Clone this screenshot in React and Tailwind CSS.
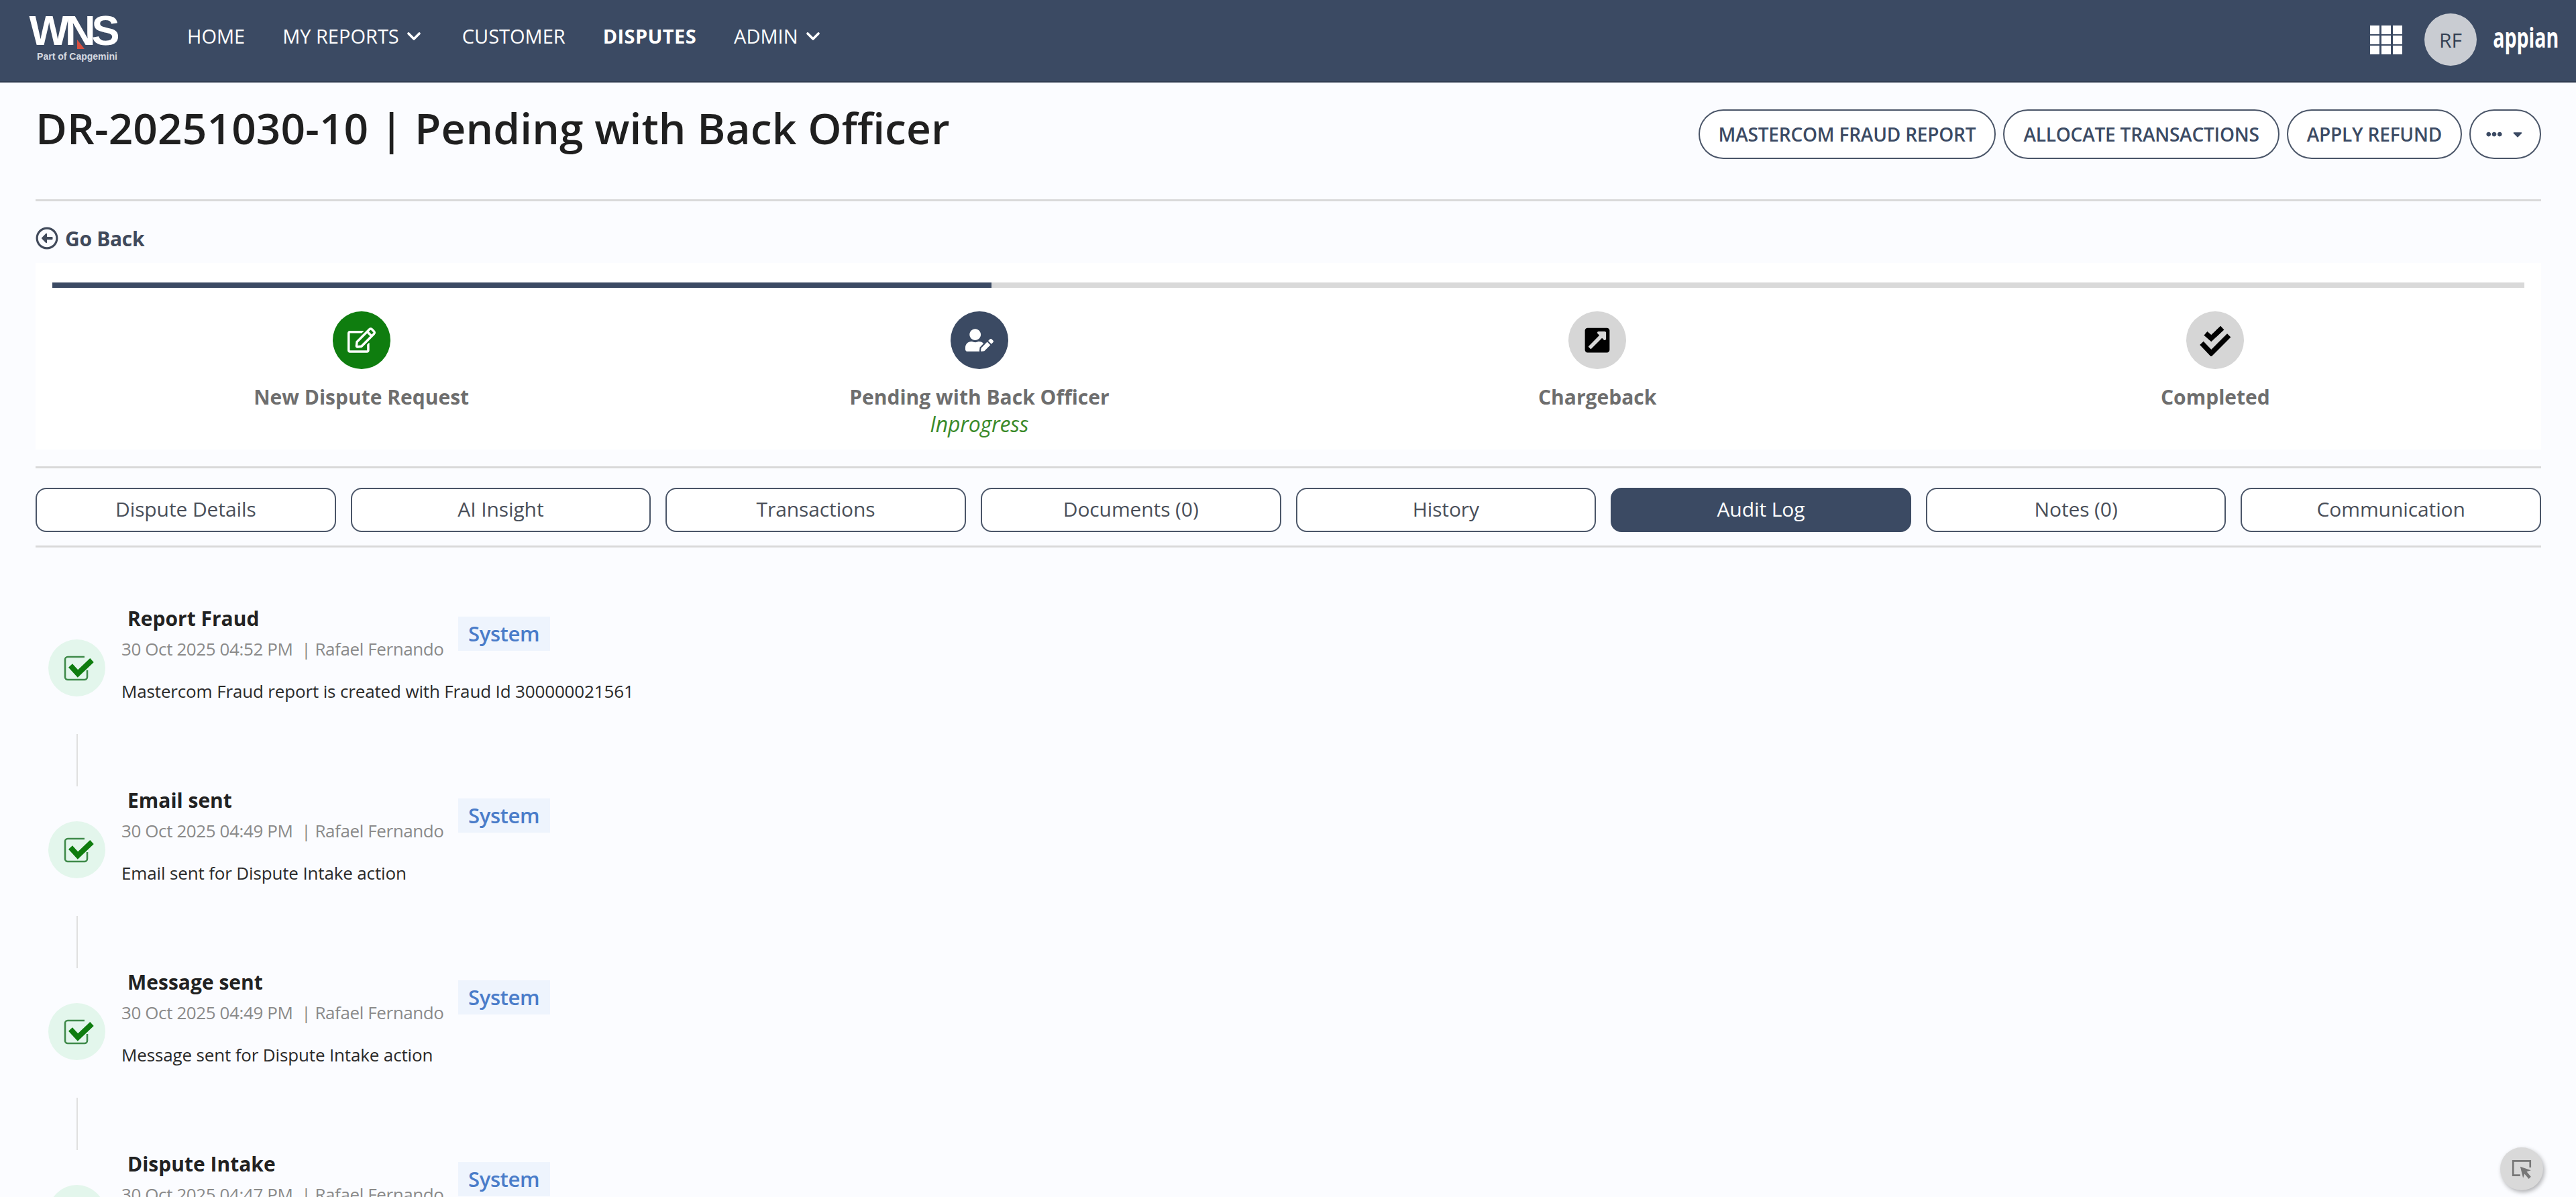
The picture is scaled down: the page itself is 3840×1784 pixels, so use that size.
import { ChevronDown } from 'lucide-react';
import {
  FaRegEdit,
  FaUserEdit,
  FaExternalLinkSquareAlt,
  FaRegArrowAltCircleLeft,
  FaEllipsisH,
  FaCaretDown,
} from 'react-icons/fa';

function DoubleCheck({ className }) {
  return (
    <svg viewBox="85 105 145 140" className={className} fill="none" stroke="currentColor" strokeWidth="23" strokeLinecap="butt" strokeLinejoin="miter">
      <path d="M115 143l25 22 50-47" />
      <path d="M97 187l43 45 80-80" />
    </svg>
  );
}

function LogCheck() {
  return (
    <svg viewBox="0 0 46 38" className="w-[46px] h-[38px] ml-[6px]" fill="none">
      <path d="M31 2H6a4 4 0 0 0-4 4v26a4 4 0 0 0 4 4h25a4 4 0 0 0 4-4V22" stroke="#3f8a4a" strokeWidth="2.6" />
      <path d="M10 15l11 12L42 7" stroke="#0f7d0f" strokeWidth="8" />
    </svg>
  );
}

function GridIcon() {
  return (
    <svg viewBox="0 0 48 43" className="w-[48px] h-[43px]" fill="#fff">
      {[0, 17, 34].map((x) =>
        [0, 15, 30].map((y) => <rect key={`${x}-${y}`} x={x} y={y} width="14" height="13" />)
      )}
    </svg>
  );
}

const steps = [
  { label: 'New Dispute Request', icon: FaRegEdit, circle: 'bg-[#0f7d0f] text-white', size: 'w-[42px] h-[42px]' },
  { label: 'Pending with Back Officer', icon: FaUserEdit, circle: 'bg-[#3b4a63] text-white', sub: 'Inprogress', size: 'w-[42px] h-[42px]' },
  { label: 'Chargeback', icon: FaExternalLinkSquareAlt, circle: 'bg-[#d6d6d6] text-black', size: 'w-[42px] h-[42px]' },
  { label: 'Completed', icon: DoubleCheck, circle: 'bg-[#d6d6d6] text-black', size: 'w-[48px] h-[47px]' },
];

const tabs = ['Dispute Details', 'AI Insight', 'Transactions', 'Documents (0)', 'History', 'Audit Log', 'Notes (0)', 'Communication'];

const logs = [
  { title: 'Report Fraud', date: '30 Oct 2025 04:52 PM', text: 'Mastercom Fraud report is created with Fraud Id 300000021561' },
  { title: 'Email sent', date: '30 Oct 2025 04:49 PM', text: 'Email sent for Dispute Intake action' },
  { title: 'Message sent', date: '30 Oct 2025 04:49 PM', text: 'Message sent for Dispute Intake action' },
  { title: 'Dispute Intake', date: '30 Oct 2025 04:47 PM' },
];

function NavLink({ children, bold, caret }) {
  return (
    <div className={`flex items-center gap-[6px] text-[29px] text-white ${bold ? 'font-bold tracking-[0.4px]' : 'font-normal tracking-[0px]'}`}>
      {children}
      {caret && <ChevronDown className="w-[32px] h-[32px]" strokeWidth={2.75} />}
    </div>
  );
}

function ActionButton({ children }) {
  return (
    <button className="h-[74px] px-[28px] rounded-full border-2 border-[#4a5568] bg-white text-[28px] font-semibold tracking-[-0.2px] text-[#3b4a63] flex items-center gap-[10px]">
      {children}
    </button>
  );
}

function LogItem({ item }) {
  return (
    <div className="flex items-start h-[193px] gap-[24px] shrink-0">
      <div className="mt-[52px] w-[85px] h-[85px] rounded-full bg-[#e3f6ec] flex items-center justify-center">
        <LogCheck />
      </div>
      <div className="flex flex-col">
        <div className="flex items-start">
          <div className="flex flex-col">
            <div className="ml-[9px] text-[30px] leading-[42px] font-bold text-[#222]">{item.title}</div>
            <div className="mt-[2px] text-[26px] leading-[44px] text-[#8a8a8a] tracking-[-0.4px]">
              {item.date}&nbsp; | Rafael Fernando
            </div>
          </div>
          <div className="ml-[21px] mt-[18px] h-[51px] w-[137px] bg-[#eef4fd] text-[#4a7cc9] text-[31px] font-semibold tracking-[-0.4px] flex items-center justify-center">
            System
          </div>
        </div>
        {item.text && <div className="mt-[23px] text-[26px] leading-[36px] text-[#2a2a2a] tracking-[-0.15px]">{item.text}</div>}
      </div>
    </div>
  );
}

export default function App() {
  return (
    <div className="relative h-[1784px] overflow-hidden bg-[#fbfcff] font-['Open_Sans',sans-serif]">
      {/* top bar */}
      <header className="h-[123px] bg-[#3b4a63] border-b-2 border-[#2f3b50] flex items-start justify-between pl-[46px] pr-[26px]">
        <div className="flex items-start">
          <div className="relative w-[130px] pt-[14px] flex flex-col items-center text-white">
            <div className="font-['Liberation_Sans',sans-serif] font-bold text-[63px] leading-[62px] tracking-[-6px] pr-[6px]">WNS</div>
            <div className="font-['Liberation_Sans',sans-serif] text-[14px] leading-[16px] font-bold text-[#d5d9e0] ml-[8px]">Part of Capgemini</div>
            <svg className="absolute left-[66px] top-[59px] w-[14px] h-[14px]" viewBox="0 0 14 14">
              <polygon points="3,0 14,14 3,14" fill="#d9503f" />
            </svg>
          </div>
          <nav className="ml-[103px] mt-[32px] flex items-center gap-[56px]">
            <NavLink>HOME</NavLink>
            <NavLink caret>MY REPORTS</NavLink>
            <NavLink>CUSTOMER</NavLink>
            <NavLink bold>DISPUTES</NavLink>
            <NavLink caret>ADMIN</NavLink>
          </nav>
        </div>
        <div className="flex items-center mt-[20px]">
          <GridIcon />
          <div className="ml-[33px] w-[78px] h-[78px] rounded-full bg-[#c9ccd2] flex items-center justify-center text-[30px] text-[#333f52] font-medium">RF</div>
          <div className="ml-[28px] w-[94px] flex justify-end">
            <span className="text-[42px] leading-none font-bold text-white scale-x-[0.68] origin-right pb-[8px]">appian</span>
          </div>
        </div>
      </header>

      <main className="pl-[53px] pr-[52px]">
        {/* title row */}
        <div className="h-[177px] border-b-[3px] border-[#d9d9d9] flex items-start justify-between">
          <h1 className="mt-[23px] text-[64px] leading-[90px] font-semibold tracking-[0.1px] text-[#1f1f1f]">DR-20251030-10 | Pending with Back Officer</h1>
          <div className="mt-[40px] flex items-center gap-[11px]">
            <ActionButton>MASTERCOM FRAUD REPORT</ActionButton>
            <ActionButton>ALLOCATE TRANSACTIONS</ActionButton>
            <ActionButton>APPLY REFUND</ActionButton>
            <button className="h-[74px] w-[107px] rounded-full border-2 border-[#4a5568] bg-white text-[#3b4a63] flex items-center justify-center gap-[12px]">
              <FaEllipsisH className="w-[24px] h-[24px]" />
              <FaCaretDown className="w-[22px] h-[22px]" />
            </button>
          </div>
        </div>

        <div className="mt-[37px] h-[36px] flex items-center gap-[10px] text-[#414a5b]">
          <FaRegArrowAltCircleLeft className="w-[34px] h-[34px]" />
          <span className="text-[30px] font-bold tracking-[-0.3px]">Go Back</span>
        </div>

        {/* progress */}
        <section className="mt-[19px] h-[278px] bg-white px-[25px] pt-[29px]">
          <div className="flex h-[8px] bg-[#d9d9d9]">
            <div className="w-[1400px] bg-[#3b4a63]" />
          </div>
          <div className="grid grid-cols-4 mt-[35px]">
            {steps.map((s) => (
              <div key={s.label} className="flex flex-col items-center">
                <div className={`w-[86px] h-[86px] rounded-full flex items-center justify-center ${s.circle}`}>
                  <s.icon className={s.size} />
                </div>
                <div className="mt-[21px] text-[30px] leading-[42px] font-bold text-[#6e6e6e]">{s.label}</div>
                {s.sub && <div className="text-[32px] leading-[38px] italic text-[#3a8a2a] tracking-[-0.2px]">{s.sub}</div>}
              </div>
            ))}
          </div>
        </section>

        {/* tabs */}
        <div className="mt-[25px] border-t-[3px] border-[#d9d9d9] pt-[29px] pb-[20px] border-b-[3px] grid grid-cols-8 gap-[22px]">
          {tabs.map((t) => (
            <div
              key={t}
              className={`h-[66px] pb-[4px] rounded-[16px] border-2 flex items-center justify-center text-[30px] tracking-[-0.1px] ${
                t === 'Audit Log' ? 'bg-[#3b4a63] border-[#3b4a63] text-white font-medium' : 'bg-white border-[#4a5568] text-[#4a4f59]'
              }`}
            >
              {t}
            </div>
          ))}
        </div>

        {/* audit log */}
        <div className="mt-[85px] ml-[19px] flex flex-col">
          {logs.map((item, i) => (
            <div key={item.title} className="flex flex-col">
              <LogItem item={item} />
              {i < logs.length - 1 && <div className="ml-[42px] w-[2px] h-[78px] bg-[#e0e0e0]" />}
            </div>
          ))}
        </div>
      </main>

      {/* floating helper button */}
      <button className="absolute left-[3727px] top-[1710px] w-[64px] h-[64px] rounded-full bg-[#d9d9d9] shadow-[2px_3px_6px_rgba(0,0,0,0.3)] flex items-center justify-center">
        <svg viewBox="0 0 32 32" className="w-[34px] h-[34px]" fill="none">
          <path d="M14 25H4V5h24v9" stroke="#777" strokeWidth="2.5" />
          <path d="M14 13l15 5-6 2 6 7-3 3-6-7-2 6z" fill="#777" />
        </svg>
      </button>
    </div>
  );
}
